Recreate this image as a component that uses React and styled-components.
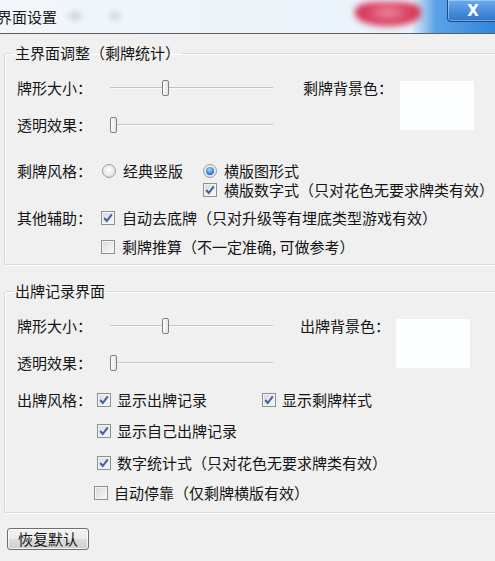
import styled, { createGlobalStyle } from "styled-components";

const GlobalStyle = createGlobalStyle`
  html, body {
    margin: 0;
    padding: 0;
    background: #f0f0f0;
  }
  * {
    box-sizing: border-box;
  }
`;

const Window = styled.div`
  width: 495px;
  height: 561px;
  overflow: hidden;
  background: #f0f0f0;
  font-family: "Noto Sans CJK SC", "Noto Sans", sans-serif;
  font-size: 15px;
  color: #141414;
`;

const TitleBar = styled.div`
  position: relative;
  height: 34px;
  display: flex;
  align-items: center;
  background: linear-gradient(
    90deg,
    #f3f7fb 0%,
    #eef4fa 45%,
    #e9f3fb 83%,
    #5aa2e6 88%,
    #3486dc 100%
  );
  border-bottom: 1px solid #55606b;
`;

const TitleText = styled.span`
  margin-left: -3px;
  line-height: 18px;
  font-size: 15px;
  color: #1a1a1a;
`;

const RedBlur = styled.div`
  position: absolute;
  left: 355px;
  top: 2px;
  width: 66px;
  height: 24px;
  border-radius: 35% 35% 50% 50%;
  background: radial-gradient(ellipse at 50% 45%, #ef8fa6 0%, #d8385a 55%, #cf2549 100%);
  filter: blur(3px);
`;

const GreyBlur = styled.div`
  position: absolute;
  left: ${(p) => p.$x}px;
  top: 12px;
  width: ${(p) => p.$w}px;
  height: 8px;
  border-radius: 50%;
  background: #aab4c0;
  filter: blur(3px);
  opacity: 0.6;
`;

const CloseButton = styled.div`
  margin-left: auto;
  margin-right: -4px;
  align-self: flex-start;
  width: 52px;
  height: 22px;
  display: flex;
  align-items: center;
  justify-content: center;
  border: 1px solid #1d4c88;
  border-top: none;
  border-radius: 0 0 0 4px;
  background: linear-gradient(#6aaaf0, #2f74c9);
  box-shadow: inset 0 0 0 1px rgba(255, 255, 255, 0.35);
  color: #fff;
  font-family: "DejaVu Sans", sans-serif;
  font-weight: bold;
  font-size: 15px;
`;

const Body = styled.div`
  padding: 10px 0 0 4px;
  display: flex;
  flex-direction: column;
`;

const Group = styled.fieldset`
  margin: ${(p) => p.$mt || 0}px -20px 0 0;
  padding: 0 0 ${(p) => p.$pb}px 12px;
  border: 1px solid #d3d9de;
  border-radius: 3px;
  box-shadow: inset 1px 1px 0 #fff, 1px 1px 0 #fff;
  min-width: 0;
`;

const Legend = styled.legend`
  margin-left: -4px;
  padding: 0 2px;
  line-height: 18px;
`;

const TopArea = styled.div`
  display: flex;
  align-items: flex-start;
  margin-top: ${(p) => p.$mt}px;
`;

const SliderStack = styled.div`
  display: flex;
  flex-direction: column;
`;

const Row = styled.div`
  display: flex;
  align-items: center;
  height: 18px;
  margin-top: ${(p) => p.$mt || 0}px;
  padding-left: ${(p) => p.$indent || 0}px;
`;

const Label = styled.span`
  width: ${(p) => p.$w}px;
  flex-shrink: 0;
  line-height: 18px;
  white-space: nowrap;
`;

const Track = styled.div`
  position: relative;
  width: 163px;
  height: 18px;
  &::before {
    content: "";
    position: absolute;
    left: 0;
    right: 0;
    top: 8px;
    height: 1px;
    background: #c4c4c4;
    border-bottom: 1px solid #fbfbfb;
  }
`;

const Thumb = styled.div`
  position: absolute;
  top: 1px;
  width: 7px;
  height: 16px;
  border: 1px solid #7f7f7f;
  border-radius: 2px;
  background: linear-gradient(90deg, #fdfdfd, #e3e3e3);
`;

const ColorSide = styled.div`
  display: flex;
  align-items: flex-start;
  margin-left: ${(p) => p.$gap}px;
`;

const Swatch = styled.div`
  width: 74px;
  height: 49px;
  margin-top: ${(p) => p.$top}px;
  margin-left: ${(p) => p.$gap}px;
  background: #fdfeff;
`;

const Option = styled.span`
  display: inline-flex;
  align-items: center;
  gap: ${(p) => p.$gap || 7}px;
  margin-left: ${(p) => p.$ml || 0}px;
  line-height: 18px;
  white-space: nowrap;
`;

const RadioCircle = styled.span`
  width: 14px;
  height: 14px;
  border-radius: 50%;
  border: 1px solid #9c9c9c;
  background: radial-gradient(circle at 50% 40%, #ffffff, #d6d6d6);
  display: flex;
  align-items: center;
  justify-content: center;
  &::after {
    content: "";
    display: ${(p) => (p.$on ? "block" : "none")};
    width: 8px;
    height: 8px;
    border-radius: 50%;
    background: radial-gradient(circle at 45% 35%, #a8dcff, #1f6fc4 70%);
  }
`;

const Box = styled.span`
  width: 14px;
  height: 14px;
  border: 1px solid #8e8f8f;
  background: linear-gradient(135deg, #d8d8d8, #fafafa);
  box-shadow: inset 0 0 0 1px #f4f4f4;
  display: flex;
  align-items: center;
  justify-content: center;
`;

const Button = styled.button`
  margin: 15px 0 0 3px;
  align-self: flex-start;
  width: 82px;
  height: 22px;
  padding: 0;
  border: 1px solid #707070;
  border-radius: 3px;
  background: linear-gradient(#f4f4f4 0%, #ebebeb 50%, #dddddd 51%, #cfcfcf 100%);
  box-shadow: inset 0 0 0 1px rgba(255, 255, 255, 0.7);
  font-family: "Noto Sans CJK SC", sans-serif;
  font-size: 15px;
  line-height: 18px;
  color: #141414;
`;

const Radio = ({ on, children, ml }) => (
  <Option $ml={ml}>
    <RadioCircle $on={on} />
    {children}
  </Option>
);

const Check = ({ on, children, ml, gap }) => (
  <Option $ml={ml} $gap={gap}>
    <Box>
      {on && (
        <svg width="10" height="10" viewBox="0 0 10 10">
          <path
            d="M1.2 5 L3.8 8 L8.8 1.4"
            fill="none"
            stroke="#3d5fa3"
            strokeWidth="2"
          />
        </svg>
      )}
    </Box>
    {children}
  </Option>
);

const Slider = ({ pos }) => (
  <Track>
    <Thumb style={{ left: pos }} />
  </Track>
);

const SliderBlock = ({ alphaPos, colorLabel, colorGap, swatchGap, mt }) => (
  <TopArea $mt={mt}>
    <SliderStack>
      <Row>
        <Label $w={93}>牌形大小：</Label>
        <Slider pos={52} />
      </Row>
      <Row $mt={19}>
        <Label $w={93}>透明效果：</Label>
        <Slider pos={alphaPos} />
      </Row>
    </SliderStack>
    <ColorSide $gap={colorGap}>
      <Label>{colorLabel}</Label>
      <Swatch $top={2} $gap={swatchGap} />
    </ColorSide>
  </TopArea>
);

const App = () => {
  return (
    <Window>
      <GlobalStyle />
      <TitleBar>
        <TitleText>界面设置</TitleText>
        <GreyBlur $x={68} $w={14} />
        <GreyBlur $x={110} $w={10} />
        <RedBlur />
        <CloseButton>X</CloseButton>
      </TitleBar>
      <Body>
        <Group $pb={8}>
          <Legend>主界面调整（剩牌统计）</Legend>
          <SliderBlock
            mt={17}
            alphaPos={0}
            colorLabel="剩牌背景色："
            colorGap={30}
            swatchGap={7}
          />
          <Row $mt={28}>
            <Label $w={85}>剩牌风格：</Label>
            <Radio>经典竖版</Radio>
            <Radio on ml={20}>
              横版图形式
            </Radio>
          </Row>
          <Row $mt={1} $indent={186}>
            <Check on gap={7}>
              横版数字式（只对花色无要求牌类有效）
            </Check>
          </Row>
          <Row $mt={10}>
            <Label $w={84}>其他辅助：</Label>
            <Check on gap={7}>
              自动去底牌（只对升级等有埋底类型游戏有效）
            </Check>
          </Row>
          <Row $mt={11} $indent={84}>
            <Check gap={7}>剩牌推算（不一定准确, 可做参考）</Check>
          </Row>
        </Group>

        <Group $mt={17} $pb={10}>
          <Legend>出牌记录界面</Legend>
          <SliderBlock
            mt={17}
            alphaPos={0}
            colorLabel="出牌背景色："
            colorGap={27}
            swatchGap={6}
          />
          <Row $mt={19}>
            <Label $w={80}>出牌风格：</Label>
            <Check on gap={6}>显示出牌记录</Check>
            <Check on gap={6} ml={55}>
              显示剩牌样式
            </Check>
          </Row>
          <Row $mt={13} $indent={80}>
            <Check on gap={6}>显示自己出牌记录</Check>
          </Row>
          <Row $mt={14} $indent={80}>
            <Check on gap={6}>数字统计式（只对花色无要求牌类有效）</Check>
          </Row>
          <Row $mt={12} $indent={77}>
            <Check gap={6}>自动停靠（仅剩牌横版有效）</Check>
          </Row>
        </Group>

        <Button>恢复默认</Button>
      </Body>
    </Window>
  );
};

export default App;
